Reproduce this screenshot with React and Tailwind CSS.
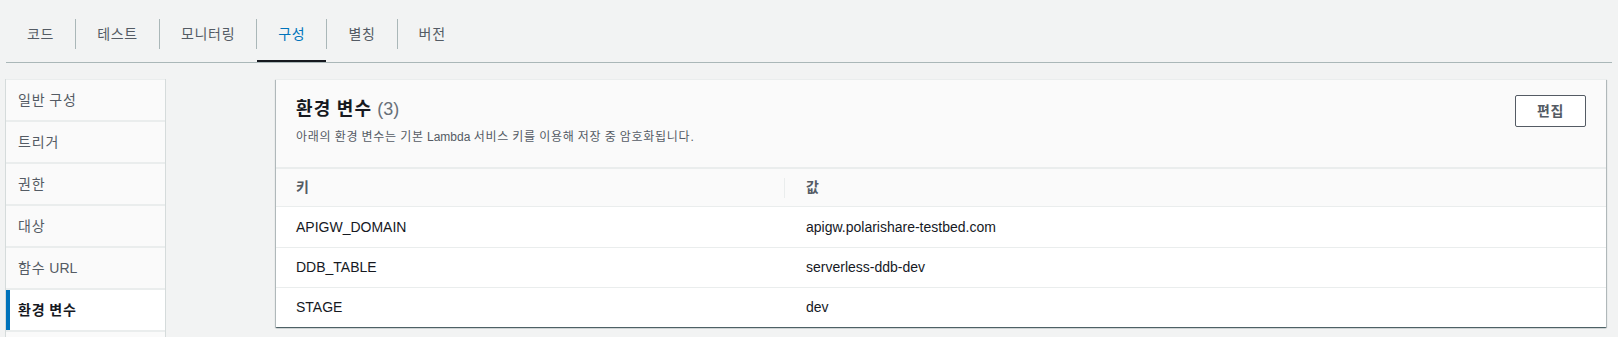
import React from 'react';

const TABS = ['코드', '테스트', '모니터링', '구성', '별칭', '버전'];
const ACTIVE_TAB = '구성';

// last entry is only partly visible at the bottom edge, so it carries no label
const SIDE_ITEMS = ['일반 구성', '트리거', '권한', '대상', '함수 URL', '환경 변수', ''];
const ACTIVE_SIDE = '환경 변수';

const VARS = [
  { key: 'APIGW_DOMAIN', value: 'apigw.polarishare-testbed.com' },
  { key: 'DDB_TABLE', value: 'serverless-ddb-dev' },
  { key: 'STAGE', value: 'dev' }
];

// Hangul from the CJK font runs a bit narrower than the original UI font,
// so only the hangul runs get extra letter spacing
function Ko({ text, track = 'tracking-[0.06em]' }) {
  const parts = text.split(/([\uac00-\ud7a3]+)/);
  return (
    <span>
      {parts.map((p, i) =>
        /[\uac00-\ud7a3]/.test(p) ? <span key={i} className={track}>{p}</span> : <React.Fragment key={i}>{p}</React.Fragment>
      )}
    </span>
  );
}

function Tabs() {
  return (
    <div className="mx-[6px] h-[63px] flex items-stretch border-b border-[#aab7b8]">
      {TABS.map((t, i) => {
        const active = t === ACTIVE_TAB;
        return (
          <React.Fragment key={t}>
            {i > 0 && <div className="w-px h-[30px] bg-[#aab7b8] self-start mt-[19px]" />}
            <div className="relative flex items-center pt-[6px] px-[21px] text-[14px] leading-[20px] tracking-[0.05em]">
              <span className={active ? 'text-[#0073bb]' : 'text-[#545b64]'}>{t}</span>
              {active && <div className="absolute left-0 right-0 bottom-0 h-[2px] bg-[#16191f]" />}
            </div>
          </React.Fragment>
        );
      })}
    </div>
  );
}

function SideNav() {
  return (
    <div className="ml-[6px] w-[159px] flex flex-col gap-[2px] bg-[#eaeded] shadow-[-1px_0_0_0_#d5dbdb,1px_0_0_0_#d5dbdb] border-t border-[#eaeded]">
      {SIDE_ITEMS.map((item, i) => {
        const active = item === ACTIVE_SIDE;
        return (
          <div
            key={i}
            className={`h-[40px] flex-shrink-0 flex items-center text-[14px] ${
              active
                ? 'bg-white border-l-4 border-[#0073bb] pl-[8px] font-bold text-[#16191f]'
                : 'bg-[#fafafa] pl-[12px] text-[#545b64]'
            }`}
          >
            <Ko text={item} />
          </div>
        );
      })}
    </div>
  );
}

function EnvPanel() {
  return (
    <div className="ml-[111px] mr-[12px] flex-1 self-start bg-white border-t border-[#eaeded] shadow-[0_1px_1px_0_rgba(0,28,36,0.5),1px_1px_1px_0_rgba(0,28,36,0.2),-1px_1px_1px_0_rgba(0,28,36,0.2)]">
      <div className="h-[89px] bg-[#fafafa] border-b-2 border-[#eaeded] flex justify-between items-start px-[20px] pt-[15px]">
        <div className="mt-[3px]">
          <div className="text-[18px] leading-[22px] font-bold text-[#16191f]">
            <Ko text="환경 변수" track="tracking-[0.07em]" /> <span className="font-normal text-[#687078]">(3)</span>
          </div>
          <div className="mt-[9px] text-[12px] leading-[16px] text-[#545b64]">
            <Ko text="아래의 환경 변수는 기본 Lambda 서비스 키를 이용해 저장 중 암호화됩니다." />
          </div>
        </div>
        <button className="w-[71px] h-[32px] bg-white border border-[#545b64] rounded-[2px] text-[14px] font-bold text-[#545b64] tracking-[0.05em]">
          편집
        </button>
      </div>

      <div className="grid grid-cols-[508px_1fr] h-[38px] bg-[#fafafa] border-b border-[#eaeded] text-[14px] font-bold text-[#545b64]">
        <div className="flex items-center pl-[20px]">키</div>
        <div className="flex items-center">
          <div className="w-px h-[20px] bg-[#eaeded]" />
          <span className="pl-[21px]">값</span>
        </div>
      </div>

      {VARS.map((v, i) => (
        <div
          key={v.key}
          className={`grid grid-cols-[508px_1fr] h-[40px] text-[14px] text-[#16191f] ${i > 0 ? 'border-t border-[#eaeded]' : ''}`}
        >
          <div className="flex items-center pl-[20px]">{v.key}</div>
          <div className="flex items-center pl-[22px]">{v.value}</div>
        </div>
      ))}
    </div>
  );
}

export default function App() {
  return (
    <div
      className="w-full h-[337px] overflow-hidden bg-[#f2f3f3]"
      style={{ fontFamily: '"Liberation Sans", "Noto Sans CJK KR", sans-serif' }}
    >
      <Tabs />
      <div className="flex mt-[16px]">
        <SideNav />
        <EnvPanel />
      </div>
    </div>
  );
}
